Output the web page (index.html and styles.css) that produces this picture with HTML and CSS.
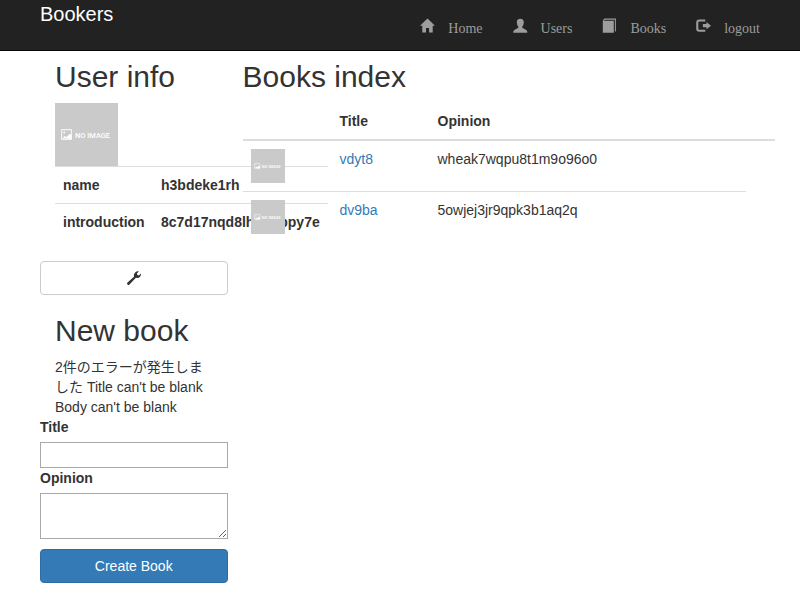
FILE: index.html
```html
<!DOCTYPE html>
<html lang="ja">
<head>
<meta charset="utf-8">
<title>Bookers</title>
<link rel="stylesheet" href="styles.css">
</head>
<body>
<svg class="defs" aria-hidden="true">
  <symbol id="no-image" viewBox="0 0 63 63">
    <rect width="63" height="63" fill="#cacaca"/>
    <rect x="6.6" y="26.6" width="9.8" height="9.8" rx=".5" fill="none" stroke="#f4f4f4" stroke-width="1.1"/>
    <circle cx="9.3" cy="29.5" r=".9" fill="#fff"/>
    <path d="M7.500 35.300l2-2.300 2 1L14.500 31l2 1v4z" fill="#fff"/>
    <text class="no-image-text" x="20" y="34.500" textLength="35" lengthAdjust="spacingAndGlyphs">NO IMAGE</text>
  </symbol>
</svg>
<header class="navbar">
  <a class="brand">Bookers</a>
  <nav class="menu">
    <a class="menu-item"><svg class="icon" viewBox="0 0 15 15"><path d="M7.5.4 15 7.7h-2.3V14.6H9.1V10H6v4.6H2.3V7.7H0L7.5.4z"/></svg>Home</a>
    <a class="menu-item"><svg class="icon" viewBox="0 0 15 15"><path d="M7.3.7c2.300 0 3.500 1.300 3.500 3.200 0 1.900-.5 3.500-1.500 4.700v1.200c.6.8 3.700 1.400 4.600 3 .3.5.4 1 .4 1.900H.3c0-.9.1-1.4.4-1.900.9-1.600 4-2.200 4.600-3V8.600C4.300 7.400 3.800 5.800 3.800 3.900 3.800 2 5 .7 7.300.7z"/></svg>Users</a>
    <a class="menu-item"><svg class="icon" viewBox="0 0 15 15"><path d="M.8 2.800h11V14.700H.8zM.8 2.400 2.400.6H13.900V13L12.900 13.900V1.700H3L2.300 2.400z"/></svg>Books</a>
    <a class="menu-item"><svg class="icon" viewBox="0 0 15 15"><path d="M9.300 1.500v2H3.300q-1 0-1 1v6.300q0 1 1 1h6v2H3.200Q.2 13.800.2 10.800V4.500q0-3 3-3zM10.500 4.100 15 7.700l-4.500 3.600V9.300H6.900V6.100h3.600z"/></svg>logout</a>
  </nav>
</header>
<main class="columns">
  <section class="sidebar">
    <h2 class="inset">User info</h2>
    <svg class="avatar inset"><use href="#no-image"/></svg>
    <div class="profile inset">
      <div class="profile-row"><b>name</b><b>h3bdeke1rh</b></div>
      <div class="profile-row"><b>introduction</b><b>8c7d17nqd8lhu0qppy7e</b></div>
    </div>
    <a class="button"><svg class="wrench" viewBox="0 0 14 14"><path d="M.5 13.600Q-.4 12.600.5 11.600L7 5.700C6.500 3.700 7.500 1.700 9.200.8 10.100.3 11 .2 11.800.5L9.900 2.500l.5 1.500 1.500.5 2-1.900c.3 1.400-.4 3-1.700 3.800-1 .600-2.300.700-3.300.400L2.500 13.600Q1.500 14.500.5 13.600z"/></svg></a>
    <h2 class="inset">New book</h2>
    <p class="errors inset">2件のエラーが発生しました Title can't be blank Body can't be blank</p>
    <form>
      <label for="title">Title</label>
      <input id="title" type="text">
      <label for="opinion">Opinion</label>
      <textarea id="opinion"></textarea>
      <button class="button primary" type="button">Create Book</button>
    </form>
  </section>
  <section class="content">
    <h2>Books index</h2>
    <div class="books">
      <div class="book-row head"><span></span><b>Title</b><b>Opinion</b></div>
      <div class="book-row"><svg class="thumb"><use href="#no-image"/></svg><a class="link">vdyt8</a><span>wheak7wqpu8t1m9o96o0</span></div>
      <div class="book-row ruled"><svg class="thumb"><use href="#no-image"/></svg><a class="link">dv9ba</a><span>5owjej3jr9qpk3b1aq2q</span></div>
    </div>
  </section>
</main>
</body>
</html>
```
FILE: styles.css
```css
* { box-sizing: border-box; }
body {
  margin: 0;
  height: 600px;
  overflow: hidden;
  background: #fff;
  color: #333;
  font: 14px/20px "Liberation Sans", "Noto Sans CJK JP", sans-serif;
}
.defs { display: none; }
.navbar {
  display: flex;
  justify-content: space-between;
  height: 51px;
  padding: 0 40px;
  background: #222;
  border-bottom: 1px solid #080808;
}
.brand { color: #fff; font-size: 20px; line-height: 28px; }
.menu { display: flex; gap: 30px; padding-top: 18px; }
.menu-item {
  display: flex;
  gap: 13px;
  color: #9d9d9d;
  font-family: "Liberation Serif", serif;
  line-height: 22px;
}
.icon { width: 15px; height: 15px; fill: currentColor; }
.columns { display: grid; grid-template-columns: 187.5px 562.5px; margin-left: 40px; }
.content { padding: 0 15px; }
h2 { margin: 9px 0 10px; font-size: 30px; font-weight: 500; line-height: 33px; }
.inset { margin-left: 15px; margin-right: 15px; }
.avatar { display: block; width: 63px; height: 63px; }
.no-image-text { fill: #fff; font: 500 8px Roboto, sans-serif; }
.profile { width: 273px; margin-bottom: 21px; }
.profile-row {
  display: grid;
  grid-template-columns: 98px 1fr;
  height: 37px;
  padding: 8px;
  border-top: 1px solid #ddd;
}
.button {
  display: flex;
  align-items: center;
  justify-content: center;
  width: 100%;
  height: 34px;
  border: 1px solid #ccc;
  border-radius: 4px;
  background: #fff;
}
.wrench { width: 14px; height: 14px; fill: #333; }
.button + h2 { margin-top: 19px; }
.errors { margin-top: 0; margin-bottom: 0; }
label { display: block; margin-bottom: 5px; font-weight: bold; }
input, textarea {
  display: block;
  width: 100%;
  margin: 0;
  border: 1px solid #a9a9a9;
  border-radius: 0;
  font: inherit;
  background: #fff;
}
input { height: 26px; }
textarea { height: 46px; margin-bottom: 10px; }
.primary { border-color: #2e6da4; background: #337ab7; color: #fff; font: inherit; }
.books { position: relative; }
.book-row {
  display: grid;
  grid-template-columns: 89px 98px 1fr;
  width: 503px;
  height: 50px;
  padding: 8px;
}
.book-row.head { width: 532.5px; height: 38px; border-bottom: 2px solid #ddd; }
.book-row.ruled { height: 51px; border-top: 1px solid #ddd; }
.thumb { width: 34px; height: 34px; }
.link { color: #337ab7; }
```
